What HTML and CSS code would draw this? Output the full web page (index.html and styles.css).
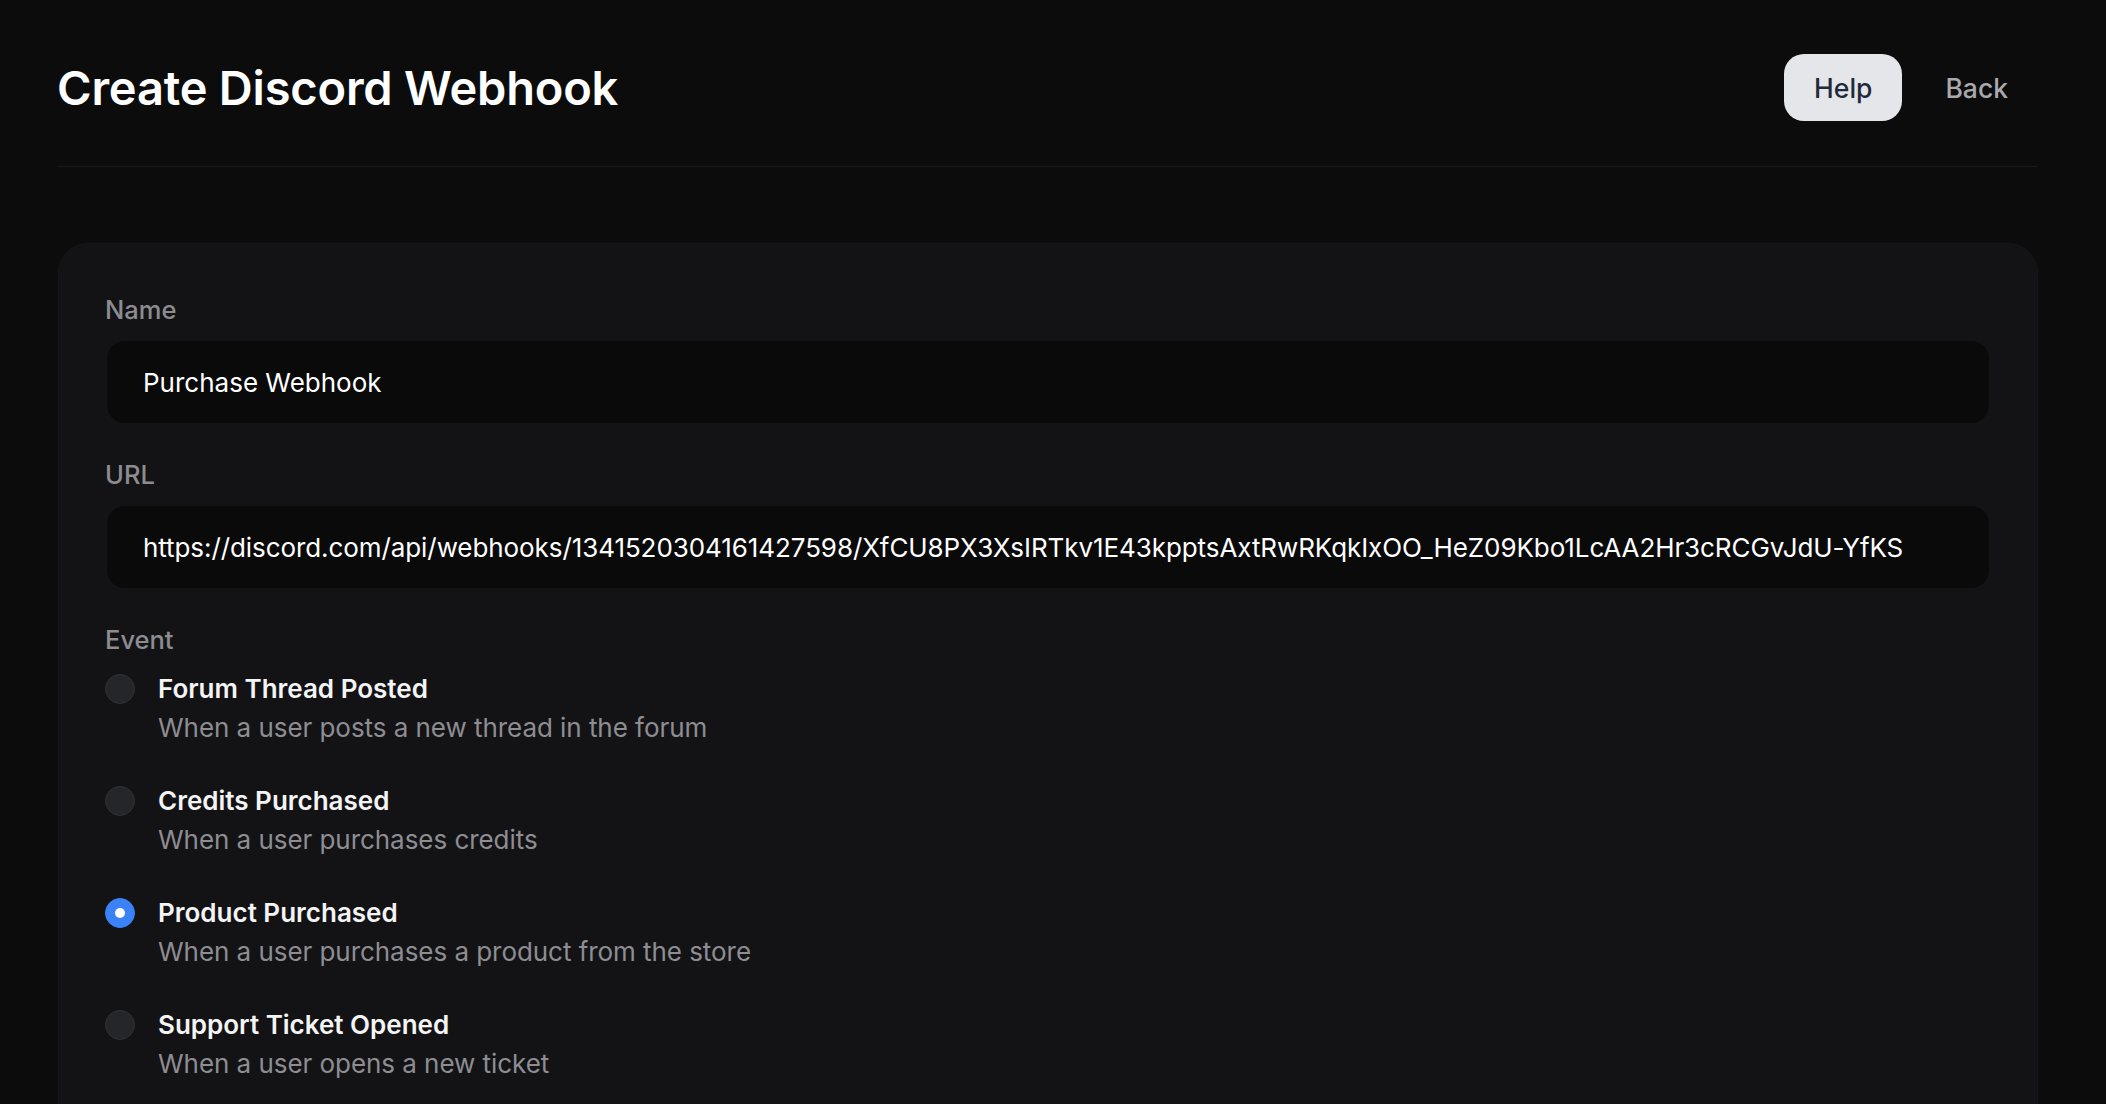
FILE: index.html
```html
<!DOCTYPE html>
<html lang="en">
<head>
<meta charset="utf-8">
<title>Create Discord Webhook</title>
<link rel="stylesheet" href="styles.css">
</head>
<body>
<div class="page">
  <header class="header">
    <h1 class="title">Create Discord Webhook</h1>
    <div class="actions">
      <button class="btn btn-light">Help</button>
      <button class="btn btn-ghost">Back</button>
    </div>
  </header>

  <main class="card">
    <div class="field">
      <label class="label">Name</label>
      <div class="input">Purchase Webhook</div>
    </div>
    <div class="field">
      <label class="label">URL</label>
      <div class="input input-url">https://discord.com/api/webhooks/1341520304161427598/XfCU8PX3XsIRTkv1E43kpptsAxtRwRKqkIxOO_HeZ09Kbo1LcAA2Hr3cRCGvJdU-YfKS</div>
    </div>
    <div class="field field-event">
      <label class="label">Event</label>
      <div class="options">
        <div class="option">
          <span class="radio"></span>
          <div class="option-text">
            <div class="option-title">Forum Thread Posted</div>
            <div class="option-desc">When a user posts a new thread in the forum</div>
          </div>
        </div>
        <div class="option">
          <span class="radio"></span>
          <div class="option-text">
            <div class="option-title">Credits Purchased</div>
            <div class="option-desc">When a user purchases credits</div>
          </div>
        </div>
        <div class="option">
          <span class="radio radio-checked"></span>
          <div class="option-text">
            <div class="option-title">Product Purchased</div>
            <div class="option-desc">When a user purchases a product from the store</div>
          </div>
        </div>
        <div class="option">
          <span class="radio"></span>
          <div class="option-text">
            <div class="option-title">Support Ticket Opened</div>
            <div class="option-desc">When a user opens a new ticket</div>
          </div>
        </div>
      </div>
    </div>
  </main>
</div>
</body>
</html>
```

FILE: styles.css
```css
* { box-sizing: border-box; }

html, body {
  margin: 0;
  padding: 0;
  background: #0c0c0d;
  height: 100%;
  overflow: hidden;
}

body {
  font-family: Inter, "Noto Sans", "Liberation Sans", sans-serif;
  color: #ffffff;
}

.page {
  padding: 0 68px 0 57px;
}

.header {
  display: flex;
  align-items: center;
  justify-content: space-between;
  padding: 54px 0 45px;
  border-bottom: 1px solid #19191b;
}

.title {
  margin: 0;
  font-size: 47px;
  font-weight: 600;
  line-height: 67px;
  color: #ffffff;
  letter-spacing: -0.2px;
}

.actions {
  display: flex;
  gap: 13px;
}

.btn {
  font-family: inherit;
  font-size: 26.5px;
  font-weight: 500;
  height: 67px;
  padding: 0 30px;
  border: none;
  border-radius: 20px;
  cursor: pointer;
}

.btn-light {
  background: #e5e6ea;
  color: #1f2a3c;
}

.btn-ghost {
  background: transparent;
  color: #a9a9ae;
}

.card {
  margin-top: 76px;
  margin-left: 1px;
  background: #131316;
  border: 1px solid #17171a;
  border-radius: 30px;
  padding: 50px 48px 60px 46px;
  min-height: 1000px;
}

.field {
  display: flex;
  flex-direction: column;
  gap: 15px;
  margin-bottom: 36px;
}

.field-event {
  gap: 13px;
}

.label {
  font-size: 25.5px;
  line-height: 32px;
  font-weight: 500;
  color: #8c8c91;
}

.input {
  height: 82px;
  display: flex;
  align-items: center;
  padding: 0 36px;
  background: #0a0a0b;
  border-radius: 18px;
  font-size: 26px;
  color: #ffffff;
  white-space: nowrap;
  overflow: hidden;
  margin-left: 2px;
}

.input-url {
  letter-spacing: -0.08px;
}

.options {
  display: flex;
  flex-direction: column;
  gap: 34px;
}

.option {
  display: flex;
  align-items: flex-start;
  gap: 23px;
}

.radio {
  flex: none;
  width: 30px;
  height: 30px;
  margin-top: 5px;
  border-radius: 50%;
  background: #25262a;
  border: 1px solid #303136;
}

.radio-checked {
  background: #3b82f6;
  border-color: #3b82f6;
  display: flex;
  align-items: center;
  justify-content: center;
}

.radio-checked::after {
  content: "";
  width: 10px;
  height: 10px;
  border-radius: 50%;
  background: #ffffff;
}

.option-title {
  font-size: 26px;
  line-height: 39px;
  font-weight: 600;
  color: #f4f4f5;
}

.option-desc {
  font-size: 26px;
  line-height: 39px;
  color: #8d8d92;
  letter-spacing: -0.05px;
}
```
